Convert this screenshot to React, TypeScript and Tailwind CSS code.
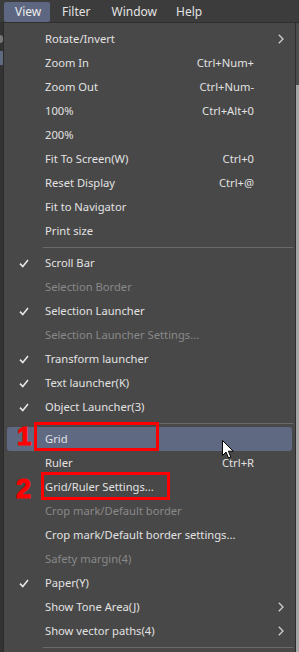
import { Fragment } from 'react';

type Item =
  | { kind: 'sep' }
  | {
      kind?: 'item';
      label: string;
      shortcut?: string;
      checked?: boolean;
      disabled?: boolean;
      submenu?: boolean;
      active?: boolean;
    };

const items: Item[] = [
  { label: 'Rotate/Invert', submenu: true },
  { label: 'Zoom In', shortcut: 'Ctrl+Num+' },
  { label: 'Zoom Out', shortcut: 'Ctrl+Num-' },
  { label: '100%', shortcut: 'Ctrl+Alt+0' },
  { label: '200%' },
  { label: 'Fit To Screen(W)', shortcut: 'Ctrl+0' },
  { label: 'Reset Display', shortcut: 'Ctrl+@' },
  { label: 'Fit to Navigator' },
  { label: 'Print size' },
  { kind: 'sep' },
  { label: 'Scroll Bar', checked: true },
  { label: 'Selection Border', disabled: true },
  { label: 'Selection Launcher', checked: true },
  { label: 'Selection Launcher Settings...', disabled: true },
  { label: 'Transform launcher', checked: true },
  { label: 'Text launcher(K)', checked: true },
  { label: 'Object Launcher(3)', checked: true },
  { kind: 'sep' },
  { label: 'Grid', active: true },
  { label: 'Ruler', shortcut: 'Ctrl+R' },
  { label: 'Grid/Ruler Settings...' },
  { label: 'Crop mark/Default border', disabled: true },
  { label: 'Crop mark/Default border settings...' },
  { label: 'Safety margin(4)', disabled: true },
  { label: 'Paper(Y)', checked: true },
  { label: 'Show Tone Area(J)', submenu: true },
  { label: 'Show vector paths(4)', submenu: true },
  { kind: 'sep' },
];

function Check() {
  return (
    <svg width="10" height="9" viewBox="0 0 10 9" className="text-[#e4e4e4]">
      <path d="M1 4.6 L3.8 7.6 L9 1" fill="none" stroke="currentColor" strokeWidth="1.6" />
    </svg>
  );
}

function Chevron() {
  return (
    <svg width="6" height="10" viewBox="0 0 6 10" className="text-[#cfcfcf]">
      <path d="M0.8 0.8 L5 5 L0.8 9.2" fill="none" stroke="currentColor" strokeWidth="1.3" />
    </svg>
  );
}

function Cursor() {
  return (
    <svg width="13" height="20" viewBox="0 0 13 20">
      <path
        d="M0.5 0.5 L0.5 15.5 L4 12 L6.5 18 L8.8 17 L6.4 11.2 L11.3 11.2 Z"
        fill="#fff"
        stroke="#000"
        strokeWidth="1"
        strokeLinejoin="miter"
      />
    </svg>
  );
}

export default function App() {
  return (
    <div
      className="relative h-[652px] w-[299px] overflow-hidden bg-[#3a3a3a] text-[11.2px] text-[#e2e2e2]"
      style={{ fontFamily: '"Noto Sans", "Open Sans", sans-serif' }}
    >
      {/* menu bar */}
      <div className="flex h-[23px] items-end border-b border-[#2f2f2f] bg-[#3c3c3c] pl-[4px] text-[12px]">
        <div className="flex h-[20px] w-[46px] items-center rounded-[2px] bg-[#5d6781] pl-[11px] text-[#ececec]">View</div>
        <div className="flex h-[20px] items-center pl-[12px]">Filter</div>
        <div className="flex h-[20px] items-center pl-[21px]">Window</div>
        <div className="flex h-[20px] items-center pl-[19px]">Help</div>
      </div>

      <div className="flex h-[629px]">
        {/* left edge of the window behind the menu */}
        <div className="flex w-[4px] flex-col border-r border-[#2c2c2c] bg-[#333]">
          <div className="mt-[12px] h-[8px] rounded-r-full bg-[#777]" />
          <div className="mt-[8px] h-[14px] bg-[#5e6a80]" />
        </div>

        {/* dropdown */}
        <div className="w-[292px] border-r border-[#2e2e2e] bg-[#484848] pt-[4px]">
          {items.map((it, i) =>
            it.kind === 'sep' ? (
              <div key={i} className="flex h-[8px] items-center pl-[39px] pr-[2px]">
                <div className="h-px w-full bg-[#6a6a6a]" />
              </div>
            ) : (
              <Fragment key={i}>
                <div
                  className={
                    'mx-[3px] flex h-[24px] items-center rounded-[3px] pl-[38px] pr-[8px] ' +
                    (it.active ? 'bg-[#5f6982] ' : '') +
                    (it.disabled ? 'text-[#898989]' : 'text-[#e2e2e2]')
                  }
                >
                  <span className="relative">
                    {it.checked && (
                      <span className="absolute left-[-26px] top-[4px]">
                        <Check />
                      </span>
                    )}
                    {it.label}
                  </span>
                  <span className="ml-auto flex items-center">
                    {it.shortcut && <span className="mr-[30px]">{it.shortcut}</span>}
                    {it.submenu && <Chevron />}
                  </span>
                </div>
              </Fragment>
            ),
          )}
        </div>

        {/* right edge behind the menu */}
        <div className="flex w-[3px] flex-col bg-[#4c4c4c]">
          <div className="mt-[62px] flex-1 bg-[#a6a6a6]" />
        </div>
      </div>

      {/* annotations */}
      <div className="absolute left-[34px] top-[422px] h-[29px] w-[125px] border-[3px] border-[#ff0000]" />
      <div className="absolute left-[41px] top-[472px] h-[28px] w-[129px] border-[3px] border-[#ff0000]" />
      <div
        className="absolute left-[17px] top-[423px] text-[26px] font-black leading-none text-[#ff0000]"
        style={{ fontFamily: '"Liberation Sans", sans-serif', WebkitTextStroke: '1px #ff0000' }}
      >
        1
      </div>
      <div
        className="absolute left-[16px] top-[476px] text-[27px] font-black leading-none text-[#ff0000]"
        style={{ fontFamily: '"Liberation Sans", sans-serif', WebkitTextStroke: '1px #ff0000' }}
      >
        2
      </div>

      {/* mouse pointer */}
      <div className="absolute left-[222px] top-[440px]">
        <Cursor />
      </div>
    </div>
  );
}
